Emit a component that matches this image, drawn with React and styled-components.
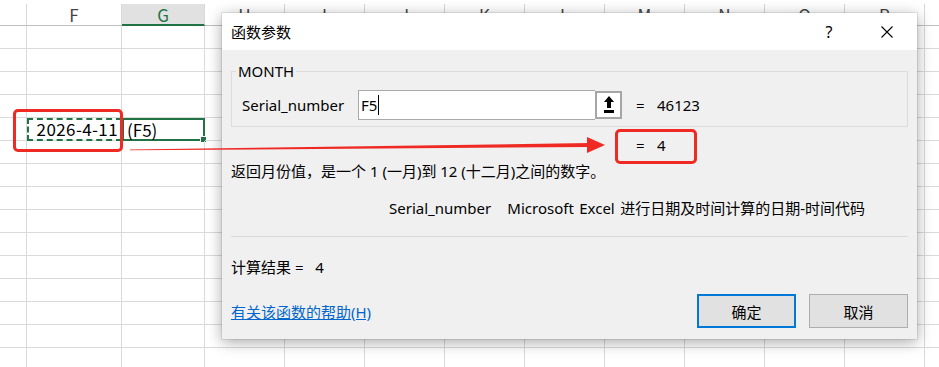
import styled, { createGlobalStyle } from "styled-components"

const Global = createGlobalStyle`
  body{
    margin: 0;
    background: #fff;
  }
`

const UI = `"Noto Sans", "Noto Sans CJK SC", sans-serif`
const CELL = `"Noto Sans CJK SC", "Noto Sans", sans-serif`

const cols = [
    { l: "E", w: 27 },
    { l: "F", w: 95 },
    { l: "G", w: 83 },
    { l: "H", w: 80 },
    { l: "I", w: 80 },
    { l: "J", w: 80 },
    { l: "K", w: 80 },
    { l: "L", w: 80 },
    { l: "M", w: 80 },
    { l: "N", w: 80 },
    { l: "O", w: 80 },
    { l: "P", w: 80 },
    { l: "Q", w: 80 },
]

const Page = styled.div`
  position: relative;
  width: 939px;
  height: 367px;
  overflow: hidden;
  background: #fff;
  padding-top: 4px;
  box-sizing: border-box;
`

const Sheet = styled.div`
  display: grid;
  grid-template-columns: ${cols.map(c => c.w + "px").join(" ")};
  grid-template-rows: 22px;
  grid-auto-rows: 23px;
  font-family: ${CELL};
`

const Head = styled.div`
  box-sizing: border-box;
  border-right: 1px solid #d8d8d8;
  border-bottom: ${p => p.$sel ? "2px solid #217346" : "1px solid #bfbfbf"};
  background: ${p => p.$sel ? "#e1e1e1" : "#fff"};
  color: ${p => p.$sel ? "#217346" : "#444"};
  font-size: 17px;
  line-height: 22px;
  text-align: center;
`

const Cell = styled.div`
  position: relative;
  box-sizing: border-box;
  border-right: 1px solid #dadada;
  border-bottom: 1px solid #dadada;
  font-size: 17px;
  line-height: 22px;
  color: #000;
  padding: 0 3px;
  white-space: nowrap;
  text-align: ${p => p.$right ? "right" : "left"};

  &.copy{
    outline: 2px dashed #217346;
    outline-offset: -2px;
    padding-right: 3px;
    letter-spacing: 0.4px;
  }
  &.active{
    border: 2px solid #217346;
    padding-left: 3px;
    line-height: 19px;
  }
`

const Handle = styled.span`
  position: absolute;
  right: -4px;
  bottom: -4px;
  width: 5px;
  height: 5px;
  background: #217346;
  border: 1px solid #fff;
`

const Dialog = styled.div`
  position: absolute;
  left: 222px;
  top: 13px;
  width: 695px;
  height: 326px;
  background: #f0f0f0;
  box-shadow: 0 0 0 1px rgba(0,0,0,0.08), 0 3px 14px rgba(0,0,0,0.35);
  font-family: ${UI};
  font-size: 15px;
  color: #000;
  display: flex;
  flex-direction: column;
`

const TitleBar = styled.div`
  height: 37px;
  background: #fff;
  display: flex;
  align-items: center;
  padding-left: 9px;
`

const Title = styled.div`
  flex: 1;
  font-size: 15px;
`

const TitleBtn = styled.div`
  width: ${p => p.$w}px;
  height: 37px;
  display: flex;
  align-items: center;
  justify-content: center;
  font-size: 16px;
`

const Body = styled.div`
  flex: 1;
  padding: 11px 9px 0 9px;
  display: flex;
  flex-direction: column;
`

const Group = styled.fieldset`
  margin: 0;
  padding: 0 0 6px 4px;
  border: 1px solid #dcdcdc;
  min-width: 0;

  & legend{
    padding: 0 2px;
    line-height: 20px;
    font-size: 15px;
  }
`

const ArgRow = styled.div`
  display: flex;
  align-items: center;
  margin: 9px 0 0 6px;
  height: 30px;
`

const ArgLabel = styled.div`
  width: 116px;
`

const Input = styled.div`
  box-sizing: border-box;
  width: 237px;
  height: 30px;
  background: #fff;
  border: 1px solid #a9a9a9;
  border-right: none;
  padding-left: 2px;
  display: flex;
  align-items: center;
  font-size: 15px;
`

const Caret = styled.span`
  display: inline-block;
  width: 1px;
  height: 20px;
  background: #000;
  margin-left: 1px;
`

const RefBtn = styled.div`
  box-sizing: border-box;
  width: 27px;
  height: 28px;
  background: #fff;
  border: 2px solid #a6a6a6;
  display: flex;
  align-items: center;
  justify-content: center;
`

const Value = styled.div`
  display: flex;
  margin-left: ${p => p.$ml}px;
  height: 22px;
  line-height: 22px;

  & span:first-child{
    width: 21px;
  }
`

const Line = styled.div`
  margin-left: ${p => p.$ml || 0}px;
  margin-top: ${p => p.$mt}px;
  line-height: 22px;
  white-space: pre;
  word-spacing: ${p => p.$ws || 0}px;
`

const Sep = styled.div`
  margin-top: 17px;
  border-top: 1px solid #d9d9d9;
`

const Footer = styled.div`
  display: flex;
  align-items: center;
  margin-top: 16px;
  gap: 13px;
`

const Link = styled.a`
  flex: 1;
  color: #0066cc;
  text-decoration: underline;
  font-size: 15px;
`

const Button = styled.div`
  box-sizing: border-box;
  width: 99px;
  height: 34px;
  background: #e1e1e1;
  border: ${p => p.$def ? "2px solid #0078d7" : "1px solid #adadad"};
  display: flex;
  align-items: center;
  justify-content: center;
  font-size: 15px;
`

const Mark = styled.div`
  position: absolute;
  left: ${p => p.$x}px;
  top: ${p => p.$y}px;
  width: ${p => p.$w}px;
  height: ${p => p.$h}px;
  box-sizing: border-box;
  border: 3px solid #ef2a24;
  border-radius: 5px;
`

const Arrow = styled.svg`
  position: absolute;
  left: 0;
  top: 0;
`

const UploadIcon = () => (
    <svg width="14" height="20" viewBox="0 0 14 20">
        <polygon points="7,1 12,7 9,7 9,13 5,13 5,7 2,7" fill="#000" />
        <rect x="2" y="15" width="10" height="3" fill="#000" />
    </svg>
)

const rows = 15

const App = () => {
    return (
        <Page>
            <Global />
            <Sheet>
                {cols.map(c => (
                    <Head key={c.l} $sel={c.l === "G"}>{c.l === "E" ? "" : c.l}</Head>
                ))}
                {Array.from({ length: rows }).map((_, r) =>
                    cols.map(c => {
                        if (r === 4 && c.l === "F") {
                            return <Cell key={c.l + r} className="copy" $right>2026-4-11</Cell>
                        }
                        if (r === 4 && c.l === "G") {
                            return <Cell key={c.l + r} className="active">(F5)<Handle /></Cell>
                        }
                        return <Cell key={c.l + r} />
                    })
                )}
            </Sheet>

            <Dialog>
                <TitleBar>
                    <Title>函数参数</Title>
                    <TitleBtn $w={56}>?</TitleBtn>
                    <TitleBtn $w={60}>
                        <svg width="12" height="12" viewBox="0 0 12 12">
                            <path d="M0.5 0.5 L11.5 11.5 M11.5 0.5 L0.5 11.5" stroke="#000" strokeWidth="1.1" />
                        </svg>
                    </TitleBtn>
                </TitleBar>
                <Body>
                    <Group>
                        <legend>MONTH</legend>
                        <ArgRow>
                            <ArgLabel>Serial_number</ArgLabel>
                            <Input>F5<Caret /></Input>
                            <RefBtn><UploadIcon /></RefBtn>
                            <Value $ml={14}><span>=</span><span>46123</span></Value>
                        </ArgRow>
                    </Group>
                    <Value $ml={405} style={{ marginTop: 7 }}><span>=</span><span>4</span></Value>
                    <Line $mt={4}>返回月份值，是一个 1 (一月)到 12 (十二月)之间的数字。</Line>
                    <Line $mt={15} $ml={158} $ws={1.5}>Serial_number   Microsoft Excel 进行日期及时间计算的日期-时间代码</Line>
                    <Sep />
                    <Line $mt={19}>计算结果 =   4</Line>
                    <Footer>
                        <Link>有关该函数的帮助(H)</Link>
                        <Button $def>确定</Button>
                        <Button>取消</Button>
                    </Footer>
                </Body>
            </Dialog>

            <Mark $x={13} $y={109} $w={110} $h={43} />
            <Mark $x={615} $y={129} $w={82} $h={35} />
            <Arrow width="939" height="367">
                <polygon points="130,149.5 590,143 590,147 130,150.3" fill="#ef2a24" />
                <polygon points="587,137 605,145 587,153" fill="#ef2a24" />
            </Arrow>
        </Page>
    )
}

export default App
